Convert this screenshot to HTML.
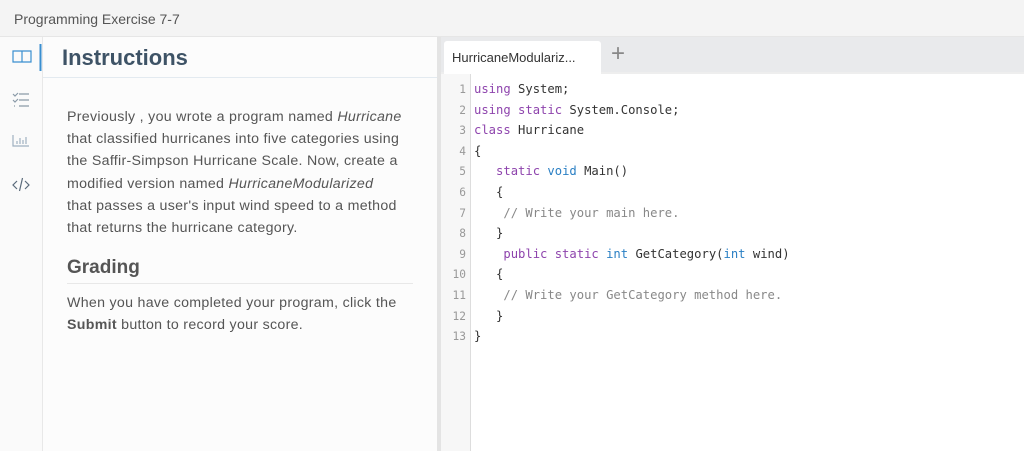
<!DOCTYPE html>
<html><head><style>
body{margin:0;width:1024px;height:451px;overflow:hidden;font-family:"Liberation Sans",sans-serif;background:#fff;position:relative}
.top{position:absolute;left:0;top:0;width:1024px;height:37px;background:#f4f4f4;border-bottom:1px solid #e6e6e6;box-sizing:border-box}
.top span{position:absolute;left:14px;top:11px;font-size:14px;color:#555}
.side{position:absolute;left:0;top:37px;width:42px;height:414px;background:#fafafa;border-right:1px solid #e8e8e8}
.panel{position:absolute;left:43px;top:37px;width:394px;height:414px;background:#fcfcfc}
.div{position:absolute;left:437px;top:37px;width:4px;height:414px;background:#e4e4e4}
.h1{position:absolute;left:62px;top:45px;font-size:22px;font-weight:bold;color:#3e5366}
.hl{position:absolute;left:43px;top:77px;width:394px;height:1px;background:#e3eaf0}
.p{position:absolute;left:67px;font-size:14.2px;letter-spacing:0.3px;line-height:22.2px;color:#555;white-space:nowrap}
.tabs{position:absolute;left:441px;top:37px;width:583px;height:35px;background:#e9eaec;border-bottom:2px solid #eee}
.tab{position:absolute;left:444px;top:41px;width:157px;height:33px;background:#fff;border-radius:3px 3px 0 0}
.tab span{position:absolute;left:8px;top:9px;font-size:13px;color:#333}
.plus{position:absolute;left:611px;top:40px;font-size:24px;color:#888}
.gut{position:absolute;left:441px;top:74px;width:29px;height:377px;background:#f7f7f7;border-right:1px solid #ddd}
.code{position:absolute;left:441px;top:79px;font-family:"DejaVu Sans Mono","Liberation Mono",monospace;font-size:12.2px;color:#333;white-space:pre}
.code div{height:20.6px;line-height:20.6px}
.ln{display:inline-block;width:25px;text-align:right;color:#999;margin-right:8px;font-size:11.2px}
.k{color:#8e44ad}.t{color:#2a7fc4}.c{color:#888}
</style></head><body>
<div class="top"><span>Programming Exercise 7-7</span></div>
<div class="side">
<svg width="42" height="180" viewBox="0 0 42 180" style="position:absolute;left:0;top:0" fill="none" stroke-width="1.2">
<path d="M13 14h9v11h-9zM22 14h9v11h-9" stroke="#3a8fd0"/>
<path d="M40.5 7v27" stroke="#3a8fd0" stroke-width="2"/>
<path d="M13 57l2 2 3-3M13 63l2 2 3-3M14 69h1M19 57h10M19 63h10M19 69h10" stroke="#8a9aa8"/>
<path d="M13 98v11h16M17 104v3M20 101v6M23 103v4M26 100v7" stroke="#9fb0c0"/>
<path d="M17 144l-4 4 4 4M25 144l4 4-4 4M22.5 141l-3 13" stroke="#5a6a7a"/>
</svg></div>
<div class="panel"></div>
<div class="h1">Instructions</div>
<div class="hl"></div>
<div class="p" style="top:106px">Previously , you wrote a program named <i>Hurricane</i><br>that classified hurricanes into five categories using<br>the Saffir-Simpson Hurricane Scale. Now, create a<br>modified version named <i>HurricaneModularized</i><br>that passes a user's input wind speed to a method<br>that returns the hurricane category.</div>
<div style="position:absolute;left:67px;top:257px;font-size:19px;font-weight:bold;color:#555">Grading</div>
<div style="position:absolute;left:67px;top:283px;width:346px;height:1px;background:#e8e8e8"></div>
<div class="p" style="top:292px">When you have completed your program, click the<br><b>Submit</b> button to record your score.</div>
<div class="div"></div>
<div class="tabs"></div>
<div class="tab"><span>HurricaneModulariz...</span></div>
<div class="plus">+</div>
<div class="gut"></div>
<div class="code"><div><span class="ln">1</span><span class="k">using</span> System;</div><div><span class="ln">2</span><span class="k">using static</span> System.Console;</div><div><span class="ln">3</span><span class="k">class</span> Hurricane</div><div><span class="ln">4</span>{</div><div><span class="ln">5</span>   <span class="k">static</span> <span class="t">void</span> Main()</div><div><span class="ln">6</span>   {</div><div><span class="ln">7</span>    <span class="c">// Write your main here.</span></div><div><span class="ln">8</span>   }</div><div><span class="ln">9</span>    <span class="k">public static</span> <span class="t">int</span> GetCategory(<span class="t">int</span> wind)</div><div><span class="ln">10</span>   {</div><div><span class="ln">11</span>    <span class="c">// Write your GetCategory method here.</span></div><div><span class="ln">12</span>   }</div><div><span class="ln">13</span>}</div></div>
</body></html>
